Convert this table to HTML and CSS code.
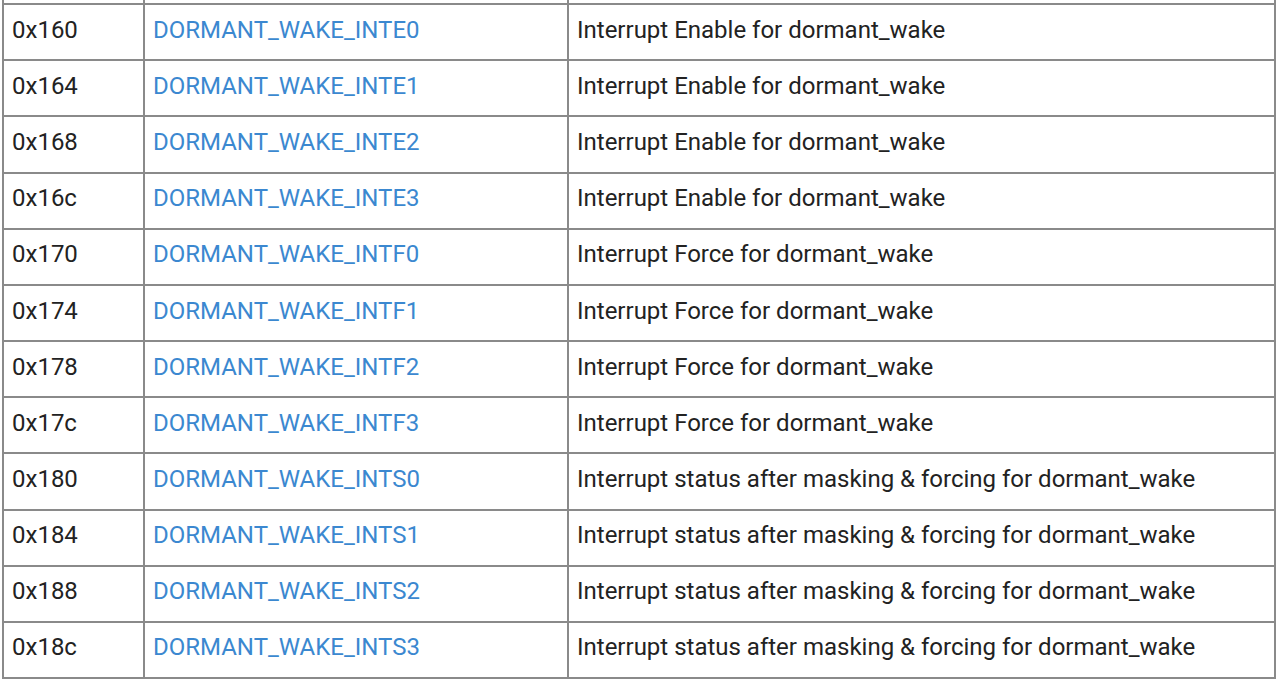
FILE: index.html
```html
<!DOCTYPE html>
<html>
<head>
<meta charset="utf-8">
<link rel="stylesheet" href="styles.css">
</head>
<body>
<table class="regs">
  <colgroup>
    <col class="c-off">
    <col class="c-name">
    <col class="c-desc">
  </colgroup>
  <tbody>
    <tr class="prev"><td></td><td></td><td></td></tr>
    <tr><td>0x160</td><td><a href="#">DORMANT_WAKE_INTE0</a></td><td>Interrupt Enable for dormant_wake</td></tr>
    <tr><td>0x164</td><td><a href="#">DORMANT_WAKE_INTE1</a></td><td>Interrupt Enable for dormant_wake</td></tr>
    <tr><td>0x168</td><td><a href="#">DORMANT_WAKE_INTE2</a></td><td>Interrupt Enable for dormant_wake</td></tr>
    <tr><td>0x16c</td><td><a href="#">DORMANT_WAKE_INTE3</a></td><td>Interrupt Enable for dormant_wake</td></tr>
    <tr><td>0x170</td><td><a href="#">DORMANT_WAKE_INTF0</a></td><td>Interrupt Force for dormant_wake</td></tr>
    <tr><td>0x174</td><td><a href="#">DORMANT_WAKE_INTF1</a></td><td>Interrupt Force for dormant_wake</td></tr>
    <tr><td>0x178</td><td><a href="#">DORMANT_WAKE_INTF2</a></td><td>Interrupt Force for dormant_wake</td></tr>
    <tr><td>0x17c</td><td><a href="#">DORMANT_WAKE_INTF3</a></td><td>Interrupt Force for dormant_wake</td></tr>
    <tr><td>0x180</td><td><a href="#">DORMANT_WAKE_INTS0</a></td><td>Interrupt status after masking &amp; forcing for dormant_wake</td></tr>
    <tr><td>0x184</td><td><a href="#">DORMANT_WAKE_INTS1</a></td><td>Interrupt status after masking &amp; forcing for dormant_wake</td></tr>
    <tr><td>0x188</td><td><a href="#">DORMANT_WAKE_INTS2</a></td><td>Interrupt status after masking &amp; forcing for dormant_wake</td></tr>
    <tr><td>0x18c</td><td><a href="#">DORMANT_WAKE_INTS3</a></td><td>Interrupt status after masking &amp; forcing for dormant_wake</td></tr>
  </tbody>
</table>
</body>
</html>
```
FILE: styles.css
```css
html, body {
  margin: 0;
  padding: 0;
  background: #ffffff;
}
body {
  font-family: Roboto, "Liberation Sans", sans-serif;
  font-size: 24px;
  color: #222222;
  overflow: hidden;
}
.regs {
  border-collapse: collapse;
  table-layout: fixed;
  width: 1272px;
  margin: -53px 0 0 2px;
}
.c-off { width: 141px; }
.c-name { width: 424px; }
.c-desc { width: 707px; }
.regs td {
  border: 2px solid #8a8a8a;
  height: 56.17px;
  box-sizing: border-box;
  padding: 0 8px 5px 8px;
  vertical-align: middle;
  white-space: nowrap;
  line-height: 28px;
}
.regs a {
  color: #3b88d0;
  text-decoration: none;
}
```
